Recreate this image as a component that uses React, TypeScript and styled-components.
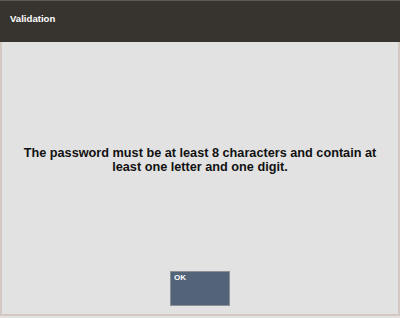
import React from 'react';
import styled, { createGlobalStyle } from 'styled-components';

const GlobalStyle = createGlobalStyle`
  html, body {
    margin: 0;
    padding: 0;
    background: #e2e2e2;
  }
  body {
    font-family: "Liberation Sans", Arial, sans-serif;
  }
`

const Screen = styled.div`
  width: 400px;
  height: 318px;
  display: flex;
  flex-direction: column;
  background: #e2e2e2;
`

const Header = styled.div`
  height: 42px;
  box-sizing: border-box;
  flex: 0 0 auto;
  background: #373430;
  border-top: 1px solid #5c5852;
  padding: 12px 0 0 10px;
`

const Title = styled.h1`
  margin: 0;
  font-size: 9.6px;
  line-height: 11px;
  font-weight: bold;
  color: #ffffff;
`

const Panel = styled.div`
  flex: 1;
  margin-bottom: 2px;
  border-left: 2px solid #d3c9c2;
  border-right: 2px solid #d3c9c2;
  border-bottom: 2px solid #d3c9c2;
  display: flex;
  flex-direction: column;
  align-items: center;
  padding-top: 105px;
`

const Message = styled.p`
  margin: 0;
  width: 370px;
  text-align: center;
  font-size: 12.7px;
  line-height: 13.5px;
  font-weight: bold;
  color: #111111;
`

const OkButton = styled.button`
  margin-top: 97px;
  width: 60px;
  height: 35px;
  background: #536479;
  border: 1px solid #8a8f96;
  color: #ffffff;
  font-family: "Liberation Sans", Arial, sans-serif;
  font-size: 8px;
  font-weight: bold;
  text-align: left;
  padding: 1px 3px;
  display: flex;
  align-items: flex-start;
`

function App() {
  return (
    <Screen>
      <GlobalStyle />
      <Header>
        <Title>Validation</Title>
      </Header>
      <Panel>
        <Message>
          The password must be at least 8 characters and contain at least one letter and one digit.
        </Message>
        <OkButton>OK</OkButton>
      </Panel>
    </Screen>
  );
}

export default App;
